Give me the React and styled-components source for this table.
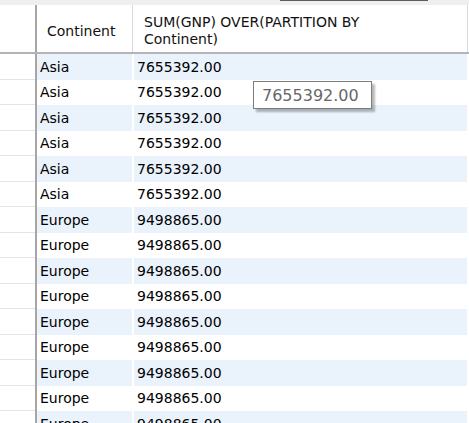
import React from "react";
import styled, { createGlobalStyle } from "styled-components";

const GlobalStyle = createGlobalStyle`
  * { box-sizing: border-box; }
  body {
    margin: 0;
    background: #fff;
    font-family: "DejaVu Sans", Verdana, sans-serif;
  }
`;

const Page = styled.div`
  position: relative;
  width: 469px;
  height: 423px;
  overflow: hidden;
  background: #fff;
`;

const TopStrip = styled.div`
  display: flex;
  height: 5px;
  background: #efefef;
`;

const StripEdge = styled.div`
  margin-left: 280px;
  width: 148px;
  height: 1px;
  background: #5c5c5c;
`;

const HeaderRow = styled.div`
  display: flex;
  height: 49px;
  border-bottom: 2px solid #b4b4b4;
`;

const Corner = styled.div`
  width: 37px;
  border-right: 2px solid #a6a6a6;
`;

const HeadCell = styled.div`
  display: flex;
  align-items: center;
  width: ${(p) => p.$width}px;
  padding: 5px 0 0 10px;
  border-right: 1px solid #dadada;
  margin-right: ${(p) => p.$gap || 0}px;
  font-size: 14px;
  line-height: 17px;
  color: #111;
`;

const HeadLabel = styled.span`
  max-width: 240px;
`;

const Row = styled.div`
  display: flex;
  height: 25.5px;
`;

const RowHead = styled.div`
  width: 37px;
  border-right: 2px solid #a6a6a6;
  box-shadow: inset 0 -1px 0 #e4e4e4;
`;

const Cell = styled.div`
  display: flex;
  align-items: center;
  width: ${(p) => p.$width}px;
  margin-right: ${(p) => p.$gap || 0}px;
  padding-left: ${(p) => p.$pad}px;
  background: ${(p) => (p.$stripe ? "#eaf2fc" : "#fff")};
  font-size: 14px;
  color: #000;
  white-space: nowrap;
`;

const Tooltip = styled.div`
  position: absolute;
  left: 253px;
  top: 81px;
  width: 119px;
  height: 28px;
  display: flex;
  align-items: center;
  padding-left: 8px;
  background: #fff;
  border: 1px solid #7c7c7c;
  box-shadow: 3px 3px 2px rgba(0, 0, 0, 0.28);
  font-size: 16px;
  color: #676767;
`;

const rows = [
  ...Array(6).fill(["Asia", "7655392.00"]),
  ...Array(10).fill(["Europe", "9498865.00"]),
];

export default function App() {
  return (
    <Page>
      <GlobalStyle />
      <TopStrip>
        <StripEdge />
      </TopStrip>
      <HeaderRow>
        <Corner />
        <HeadCell $width={96} $gap={1}>Continent</HeadCell>
        <HeadCell $width={334}>
          <HeadLabel>SUM(GNP) OVER(PARTITION BY Continent)</HeadLabel>
        </HeadCell>
      </HeaderRow>
      {rows.map(([continent, sum], i) => (
        <Row key={i}>
          <RowHead />
          <Cell $width={95} $gap={2} $pad={3} $stripe={i % 2 === 0}>
            {continent}
          </Cell>
          <Cell $width={333} $pad={3} $stripe={i % 2 === 0}>
            {sum}
          </Cell>
        </Row>
      ))}
      <Tooltip>7655392.00</Tooltip>
    </Page>
  );
}
